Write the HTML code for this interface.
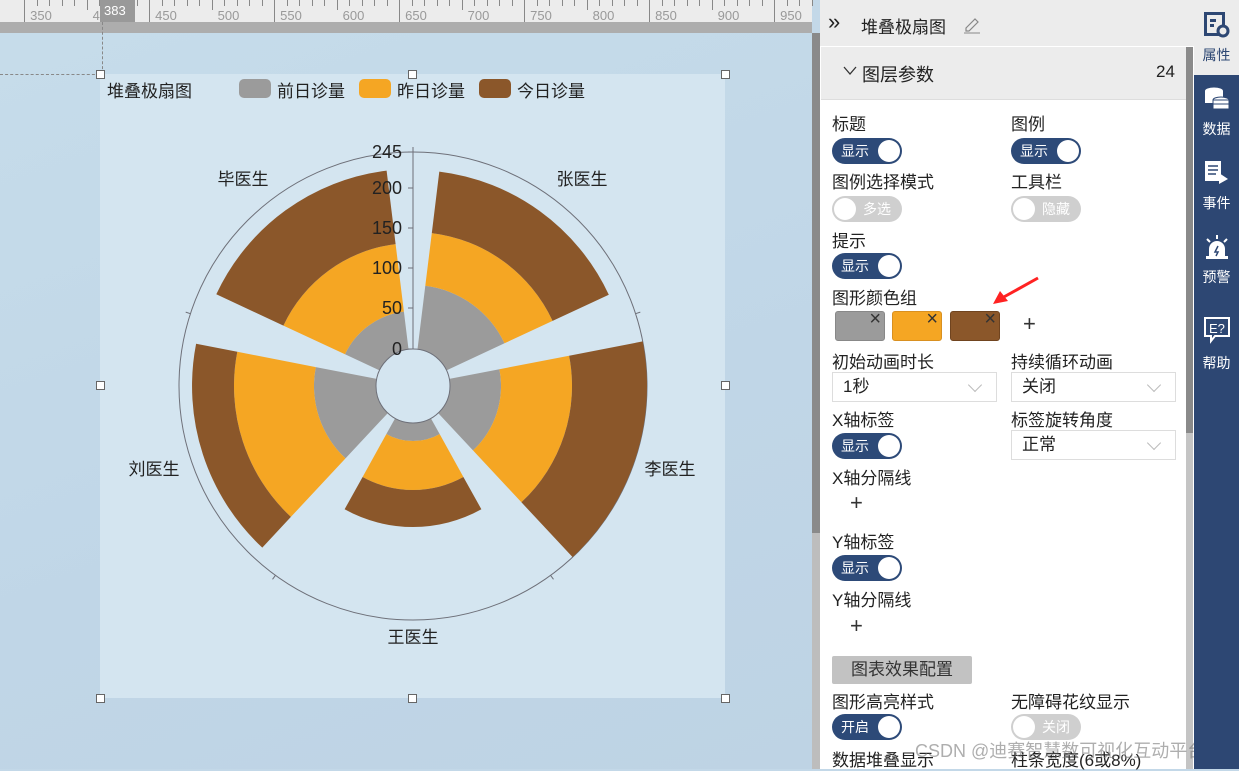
<!DOCTYPE html>
<html><head><meta charset="utf-8">
<style>
*{margin:0;padding:0;box-sizing:border-box}
body{width:1239px;height:769px;overflow:hidden;position:relative;font-family:"Liberation Sans","Noto Sans CJK SC",sans-serif;color:#222;background:#c3d8e8}
.abs{position:absolute}
.ruler{left:0;top:0;width:812px;height:22px;background:#ececec}
.rbar{left:0;top:22px;width:812px;height:11px;background:#adadad}
.canvas{left:0;top:33px;width:812px;height:736px;background:linear-gradient(160deg,#c6dcea 0%,#c0d6e7 60%,#bed3e4 100%)}
.box{left:100px;top:74px;width:625px;height:624px;background:#d4e5f0}
.h{width:9px;height:9px;border:1px solid #666;background:#fff}
.lab{font-size:17px;white-space:nowrap}
.tg{width:70px;height:26px;border-radius:13px;background:#2d4a78;color:#fff;font-size:14px;line-height:26px;padding-left:9px}
.tg:after{content:"";position:absolute;right:2px;top:2px;width:22px;height:22px;border-radius:50%;background:#fff}
.tf{width:70px;height:26px;border-radius:13px;background:#cfcfcf;color:#fff;font-size:14px;line-height:26px;padding-left:31px}
.tf:after{content:"";position:absolute;left:2px;top:2px;width:22px;height:22px;border-radius:50%;background:#fff}
.sel{width:165px;height:30px;border:1px solid #ddd;background:#fff;font-size:17px;line-height:28px;padding-left:10px}
.sel:after{content:"";position:absolute;right:16px;top:7px;width:9px;height:9px;border-right:1px solid #bbb;border-bottom:1px solid #bbb;transform:rotate(45deg)}
.sw{width:50px;height:30px;border-radius:3px}
.sw span{position:absolute;right:3px;top:-4px;font-size:20px;color:#333}
.side{left:1194px;top:0;width:45px;height:769px;background:#2d4773}
.st{color:#fff;font-size:14px;width:45px;text-align:center}
</style></head><body>
<div class="abs canvas"></div>
<div class="abs ruler" id="ruler"></div>
<div class="abs rbar"></div>
<div class="abs" style="left:100px;top:0;width:35px;height:22px;background:#999;color:#fff;font-size:13px;padding-left:4px;line-height:22px">383</div>
<div class="abs" style="left:102px;top:22px;height:52px;border-left:1px dashed #888"></div>
<div class="abs" style="left:0;top:74px;width:100px;border-top:1px dashed #888"></div>
<div class="abs box"></div>
<div class="abs h" style="left:96px;top:70px"></div>
<div class="abs h" style="left:408px;top:70px"></div>
<div class="abs h" style="left:721px;top:70px"></div>
<div class="abs h" style="left:96px;top:381px"></div>
<div class="abs h" style="left:721px;top:381px"></div>
<div class="abs h" style="left:96px;top:694px"></div>
<div class="abs h" style="left:408px;top:694px"></div>
<div class="abs h" style="left:721px;top:694px"></div>
<div class="abs lab" style="left:107px;top:77px">堆叠极扇图</div>
<div class="abs" style="left:239px;top:79px;width:32px;height:19px;border-radius:5px;background:#9b9b9b"></div>
<div class="abs lab" style="left:277px;top:77px">前日诊量</div>
<div class="abs" style="left:359px;top:79px;width:32px;height:19px;border-radius:5px;background:#f5a623"></div>
<div class="abs lab" style="left:397px;top:77px">昨日诊量</div>
<div class="abs" style="left:479px;top:79px;width:32px;height:19px;border-radius:5px;background:#8b572a"></div>
<div class="abs lab" style="left:517px;top:77px">今日诊量</div>
<svg class="abs" style="left:0;top:0" width="812" height="769" id="chart"></svg>
<div class="abs" style="left:812px;top:33px;width:8px;height:500px;background:#8a8a8a"></div>
<div class="abs" style="left:812px;top:533px;width:8px;height:236px;background:#bdbdbd"></div>
<div class="abs" style="left:820px;top:0;width:374px;height:769px;background:#fff"></div>
<div class="abs" style="left:820px;top:0;width:374px;height:46px;background:#ececec"></div>
<div class="abs" style="left:828px;top:9px;font-size:22px;color:#222">»</div>
<div class="abs" style="left:861px;top:13px;font-size:17px">堆叠极扇图</div>
<svg class="abs" style="left:962px;top:14px" width="20" height="20"><path d="M4 14 L13 5 L16 8 L7 17 L4 17 Z" fill="none" stroke="#888" stroke-width="1.2"/><line x1="2" y1="19" x2="18" y2="19" stroke="#888"/></svg>
<div class="abs" style="left:821px;top:47px;width:365px;height:53px;background:#ececec;border-bottom:1px solid #ddd"></div>
<svg class="abs" style="left:843px;top:66px" width="14" height="10"><path d="M1 1 L7 8 L13 1" fill="none" stroke="#333" stroke-width="1.3"/></svg>
<div class="abs" style="left:862px;top:61px;font-size:18px">图层参数</div>
<div class="abs" style="left:1156px;top:62px;font-size:17px">24</div>
<div class="abs" style="left:1186px;top:47px;width:7px;height:386px;background:#8a8a8a"></div>
<div class="abs" style="left:1186px;top:433px;width:7px;height:336px;background:#c4c4c4"></div>

<div class="abs lab" style="left:832px;top:110px">标题</div>
<div class="abs lab" style="left:1011px;top:110px">图例</div>
<div class="abs tg" style="left:832px;top:138px">显示</div>
<div class="abs tg" style="left:1011px;top:138px">显示</div>
<div class="abs lab" style="left:832px;top:168px">图例选择模式</div>
<div class="abs lab" style="left:1011px;top:168px">工具栏</div>
<div class="abs tf" style="left:832px;top:196px">多选</div>
<div class="abs tf" style="left:1011px;top:196px">隐藏</div>
<div class="abs lab" style="left:832px;top:227px">提示</div>
<div class="abs tg" style="left:832px;top:253px">显示</div>
<div class="abs lab" style="left:832px;top:284px">图形颜色组</div>
<div class="abs sw" style="left:835px;top:311px;background:#9b9b9b;border:1px solid #888"><span>×</span></div>
<div class="abs sw" style="left:892px;top:311px;background:#f5a623;border:1px solid #d99020"><span>×</span></div>
<div class="abs sw" style="left:950px;top:311px;background:#8b572a;border:1px solid #70441f"><span>×</span></div>
<div class="abs" style="left:1023px;top:311px;font-size:22px;color:#333">+</div>
<svg class="abs" style="left:990px;top:274px" width="52" height="34"><path d="M48 4 L12 24" stroke="#f22" stroke-width="3"/><path d="M3 30 L10 17 L18 27 Z" fill="#f22"/></svg>
<div class="abs lab" style="left:832px;top:348px">初始动画时长</div>
<div class="abs lab" style="left:1011px;top:348px">持续循环动画</div>
<div class="abs sel" style="left:832px;top:372px">1秒</div>
<div class="abs sel" style="left:1011px;top:372px">关闭</div>
<div class="abs lab" style="left:832px;top:406px">X轴标签</div>
<div class="abs lab" style="left:1011px;top:406px">标签旋转角度</div>
<div class="abs tg" style="left:832px;top:433px">显示</div>
<div class="abs sel" style="left:1011px;top:430px">正常</div>
<div class="abs lab" style="left:832px;top:464px">X轴分隔线</div>
<div class="abs" style="left:850px;top:490px;font-size:22px;color:#333">+</div>
<div class="abs lab" style="left:832px;top:528px">Y轴标签</div>
<div class="abs tg" style="left:832px;top:555px">显示</div>
<div class="abs lab" style="left:832px;top:586px">Y轴分隔线</div>
<div class="abs" style="left:850px;top:613px;font-size:22px;color:#333">+</div>
<div class="abs" style="left:832px;top:656px;width:140px;height:28px;background:#c2c2c2;border-radius:2px;font-size:17px;line-height:28px;text-align:center;color:#333">图表效果配置</div>
<div class="abs lab" style="left:832px;top:688px">图形高亮样式</div>
<div class="abs lab" style="left:1011px;top:688px">无障碍花纹显示</div>
<div class="abs tg" style="left:832px;top:714px">开启</div>
<div class="abs tf" style="left:1011px;top:714px">关闭</div>
<div class="abs lab" style="left:832px;top:746px">数据堆叠显示</div>
<div class="abs lab" style="left:1011px;top:746px">柱条宽度(6或8%)</div>
<div class="abs" style="left:915px;top:737px;font-size:18px;color:rgba(120,120,120,0.6)">CSDN @迪赛智慧数可视化互动平台</div>
<div class="abs side"></div>
<div class="abs" style="left:1194px;top:0;width:45px;height:75px;background:#ececec"></div>
<svg class="abs" style="left:1204px;top:12px" width="26" height="26"><rect x="1.5" y="1.5" width="18" height="21" fill="none" stroke="#2d4773" stroke-width="3"/><rect x="6" y="7" width="6" height="3" fill="#2d4773"/><rect x="6" y="12" width="4" height="3" fill="#2d4773"/><circle cx="19" cy="19" r="5" fill="#ececec" stroke="#2d4773" stroke-width="3"/></svg>
<div class="abs st" style="left:1194px;top:45px;color:#2d4773">属性</div>
<svg class="abs" style="left:1203px;top:86px" width="28" height="26"><ellipse cx="11" cy="5" rx="9" ry="3.5" fill="#fff"/><rect x="2" y="5" width="18" height="12" fill="#fff"/><ellipse cx="18" cy="14" rx="8" ry="3" fill="#fff" stroke="#2d4773"/><rect x="10" y="14" width="16" height="9" fill="#fff" stroke="#2d4773"/><line x1="10" y1="18" x2="26" y2="18" stroke="#2d4773"/></svg>
<div class="abs st" style="left:1194px;top:119px">数据</div>
<svg class="abs" style="left:1204px;top:160px" width="26" height="26"><rect x="1" y="1" width="16" height="20" fill="#fff"/><line x1="4" y1="6" x2="14" y2="6" stroke="#2d4773" stroke-width="1.5"/><line x1="4" y1="10" x2="14" y2="10" stroke="#2d4773" stroke-width="1.5"/><line x1="4" y1="14" x2="12" y2="14" stroke="#2d4773" stroke-width="1.5"/><path d="M15 13 L24 19 L15 24 Z" fill="#fff"/></svg>
<div class="abs st" style="left:1194px;top:193px">事件</div>
<svg class="abs" style="left:1203px;top:234px" width="28" height="26"><path d="M6 22 L6 15 A8 8 0 0 1 22 15 L22 22 Z" fill="#fff"/><rect x="3" y="22" width="22" height="3" fill="#fff"/><path d="M15 12 L12 18 L15 18 L13 22" stroke="#2d4773" fill="none" stroke-width="1.5"/><line x1="14" y1="1" x2="14" y2="5" stroke="#fff" stroke-width="2"/><line x1="4" y1="5" x2="7" y2="8" stroke="#fff" stroke-width="2"/><line x1="24" y1="5" x2="21" y2="8" stroke="#fff" stroke-width="2"/></svg>
<div class="abs st" style="left:1194px;top:267px">预警</div>
<svg class="abs" style="left:1203px;top:316px" width="28" height="28"><path d="M2 2 H26 V20 H12 L8 25 V20 H2 Z" fill="none" stroke="#fff" stroke-width="2"/><text x="6" y="17" font-size="13" fill="#fff" font-family="Liberation Sans">E?</text></svg>
<div class="abs st" style="left:1194px;top:353px">帮助</div>
<script>
var r=document.getElementById('ruler'),h='';
for(var i=0;i<66;i++){var x=24+i*12.5;var k=i%10;h+='<div class="abs" style="left:'+x.toFixed(1)+'px;top:0;width:1px;height:'+(k==0?22:(k==5?10:6))+'px;background:#888"></div>';}
for(var v=350;v<=950;v+=50){var x=41+(v-350)*1.25;h+='<div class="abs" style="left:'+(x-14)+'px;top:8px;width:28px;text-align:center;font-size:13px;color:#999">'+v+'</div>';}
r.innerHTML=h;
var s=document.getElementById('chart'),cx=413,cy=386,ri=37,g='';
function pt(a,rr){a=a*Math.PI/180;return (cx+rr*Math.sin(a)).toFixed(1)+' '+(cy-rr*Math.cos(a)).toFixed(1);}
function seg(a0,a1,r0,r1,c){return '<path d="M'+pt(a0,r0)+' L'+pt(a0,r1)+' A'+r1+' '+r1+' 0 0 1 '+pt(a1,r1)+' L'+pt(a1,r0)+' A'+r0+' '+r0+' 0 0 0 '+pt(a0,r0)+' Z" fill="'+c+'"/>';}
var d=[[101,154,216],[88,159,234],[55,104,141],[99,179,221],[75,143,217]];
var cols=['#9b9b9b','#f5a623','#8b572a'];
g+='<circle cx="'+cx+'" cy="'+cy+'" r="234" fill="none" stroke="#6e7079" stroke-width="1"/>';
for(var k=0;k<5;k++){var c=36+72*k;var prev=ri;for(var j=0;j<3;j++){g+=seg(c-29,c+29,prev,d[k][j],cols[j]);prev=d[k][j];}
var a=72*k*Math.PI/180;g+='<line x1="'+(cx+234*Math.sin(a))+'" y1="'+(cy-234*Math.cos(a))+'" x2="'+(cx+239*Math.sin(a))+'" y2="'+(cy-239*Math.cos(a))+'" stroke="#6e7079"/>';}
g+='<circle cx="'+cx+'" cy="'+cy+'" r="'+ri+'" fill="#d4e5f0" stroke="#6e7079" stroke-width="1"/>';
g+='<line x1="413" y1="349" x2="413" y2="147" stroke="#6e7079"/>';
var lv=[[0,349],[50,308],[100,268],[150,228],[200,188],[245,152]];
for(var i=0;i<lv.length;i++){g+='<line x1="408" y1="'+lv[i][1]+'" x2="413" y2="'+lv[i][1]+'" stroke="#6e7079"/><text x="402" y="'+(lv[i][1]+6)+'" text-anchor="end" font-size="18" fill="#222" font-family="Liberation Sans">'+lv[i][0]+'</text>';}
var L=[['张医生',582,185],['李医生',670,475],['王医生',413,643],['刘医生',154,475],['毕医生',243,185]];
for(var i=0;i<5;i++)g+='<text x="'+L[i][1]+'" y="'+L[i][2]+'" text-anchor="middle" font-size="17" fill="#222" font-family="Liberation Sans,Noto Sans CJK SC,sans-serif">'+L[i][0]+'</text>';
s.innerHTML=g;
</script>
</body></html>
